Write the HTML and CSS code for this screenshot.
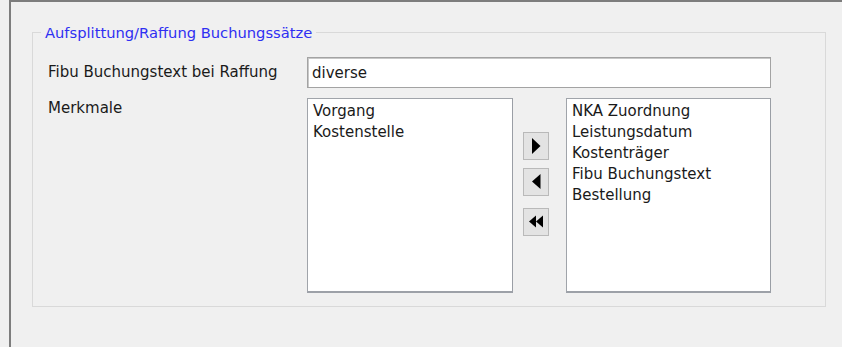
FILE: index.html
```html
<!DOCTYPE html>
<html lang="de">
<head>
<meta charset="utf-8">
<title>Aufsplittung/Raffung Buchungssätze</title>
<link rel="stylesheet" href="styles.css">
</head>
<body>
<div class="frame">
  <fieldset class="group">
    <legend class="group-title">Aufsplittung/Raffung Buchungssätze</legend>
    <div class="row row-text">
      <label class="label" for="fibu">Fibu Buchungstext bei Raffung</label>
      <input class="textbox" id="fibu" type="text" value="diverse">
    </div>
    <div class="row row-lists">
      <div class="label label-top">Merkmale</div>
      <div class="listbox">
        <div class="item">Vorgang</div>
        <div class="item">Kostenstelle</div>
      </div>
      <div class="movers">
        <button class="mover" type="button" aria-label="Hinzufügen">
          <svg width="24" height="26" viewBox="0 0 24 26"><polygon points="8,5 16.5,13 8,21" fill="#000"/></svg>
        </button>
        <button class="mover" type="button" aria-label="Entfernen">
          <svg width="24" height="26" viewBox="0 0 24 26"><polygon points="16.5,5 8,12.5 16.5,20" fill="#000"/></svg>
        </button>
        <button class="mover mover-gap" type="button" aria-label="Alle entfernen">
          <svg width="24" height="26" viewBox="0 0 24 26"><polygon points="12,6.5 5,12.5 12,18.5" fill="#000"/><polygon points="19,6.5 12,12.5 19,18.5" fill="#000"/></svg>
        </button>
      </div>
      <div class="listbox">
        <div class="item">NKA Zuordnung</div>
        <div class="item">Leistungsdatum</div>
        <div class="item">Kostenträger</div>
        <div class="item">Fibu Buchungstext</div>
        <div class="item">Bestellung</div>
      </div>
    </div>
  </fieldset>
</div>
</body>
</html>
```
FILE: styles.css
```css
html, body {
  margin: 0;
  padding: 0;
  background: #f0f0f0;
  overflow: hidden;
}
body {
  font-family: "DejaVu Sans", Verdana, sans-serif;
  font-size: 15px;
  color: #1a1a1a;
}
.frame {
  margin-left: 9px;
  height: 347px;
  box-sizing: border-box;
  border-left: 2px solid #7d7d7d;
  border-top: 2px solid #7d7d7d;
  padding: 22px 0 0 21px;
}
.group {
  margin: 0;
  width: 794px;
  box-sizing: border-box;
  border: 1px solid #d9d9d9;
  padding: 16px 0 13px 15px;
  min-width: 0;
}
.group-title {
  color: #2f2ff2;
  padding: 0 4px;
  margin-left: -7px;
  line-height: 17px;
  font-size: 14.7px;
}
.row {
  display: flex;
  align-items: flex-start;
}
.row-text {
  align-items: center;
  height: 31px;
}
.label {
  width: 259px;
  flex: none;
  line-height: 17px;
}
.label-top {
  padding-top: 2px;
}
.textbox {
  width: 464px;
  height: 31px;
  box-sizing: border-box;
  margin: 0;
  border: 1px solid #a3a3a3;
  box-shadow: inset 1px 1px 0 #c8c8c8;
  background: #fff;
  font: inherit;
  color: inherit;
  padding: 0 4px;
  outline: none;
}
.row-lists {
  margin-top: 10px;
}
.listbox {
  width: 206px;
  height: 195px;
  box-sizing: border-box;
  flex: none;
  background: #fff;
  border: 1px solid #a0a4aa;
  border-right-color: #9a9ea5;
  border-bottom: 2px solid #9da1a8;
  padding: 2px 0 0 5px;
}
.listbox + .movers + .listbox {
  width: 205px;
}
.item {
  line-height: 21px;
  white-space: nowrap;
}
.movers {
  width: 53px;
  flex: none;
  display: flex;
  flex-direction: column;
  align-items: flex-start;
  padding: 34px 0 0 10px;
  box-sizing: border-box;
  gap: 8px;
}
.mover {
  width: 26px;
  height: 28px;
  padding: 0;
  margin: 0;
  border: 1px solid #b9b9b9;
  background: #e3e3e3;
  display: block;
  box-sizing: border-box;
}
.mover svg {
  display: block;
}
.mover-gap {
  margin-top: 4px;
}
```
